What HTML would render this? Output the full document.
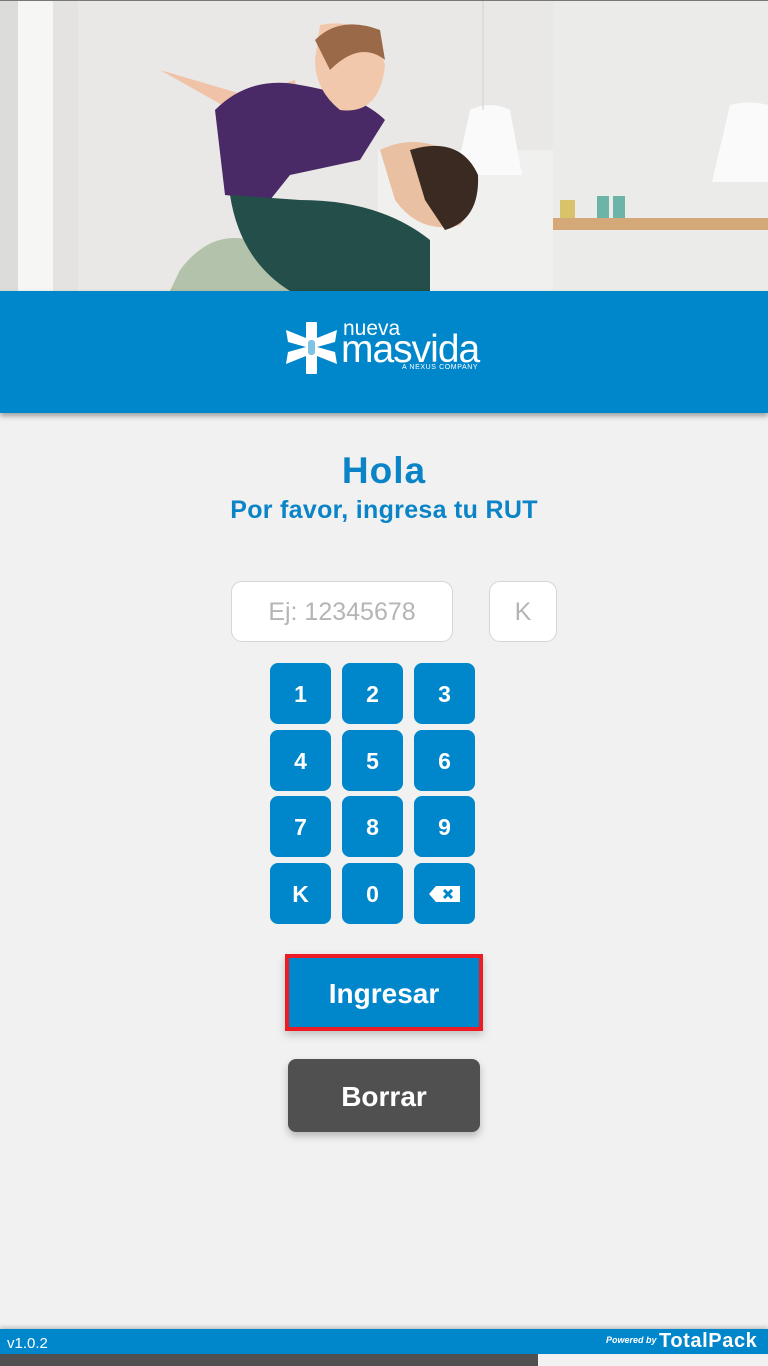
<!DOCTYPE html>
<html><head><meta charset="utf-8">
<style>
*{margin:0;padding:0;box-sizing:border-box}
body{width:768px;height:1366px;background:#f1f1f1;font-family:"Liberation Sans",sans-serif;position:relative;overflow:hidden}
.abs{position:absolute}
.hdr{left:0;top:291px;width:768px;height:122px;background:#0086ca;box-shadow:0 3px 5px rgba(0,0,0,.35)}
h1{position:absolute;left:0;width:768px;top:450px;text-align:center;color:#0a84c6;font-size:37px;font-weight:bold;letter-spacing:1px}
h2{position:absolute;left:0;width:768px;top:496px;text-align:center;color:#0a84c6;font-size:25px;font-weight:bold;letter-spacing:.3px}
.inp{background:#fff;border:1px solid #d6d6d6;border-radius:11px;color:#b5b5b5;font-size:25px;text-align:center;line-height:60px}
.key{width:61px;height:61px;background:#0086ca;border-radius:8px;color:#fff;font-weight:bold;font-size:23px;text-align:center;line-height:63px}
</style></head><body>
<svg class="abs" style="left:0;top:0" width="768" height="291" viewBox="0 0 768 291">
<rect width="768" height="291" fill="#e9e8e6"/>
<rect x="0" y="0" width="20" height="291" fill="#dcdcda"/>
<rect x="18" y="0" width="35" height="291" fill="#f6f6f5"/>
<rect x="53" y="0" width="25" height="291" fill="#e4e3e1"/>
<rect x="378" y="150" width="175" height="141" fill="#f0f0ef"/>
<rect x="553" y="0" width="215" height="291" fill="#ebebe9"/>
<rect x="553" y="218" width="215" height="12" fill="#d4a878"/>
<rect x="597" y="196" width="12" height="22" fill="#6cb3a8"/><rect x="613" y="196" width="12" height="22" fill="#6cb3a8"/>
<rect x="560" y="200" width="15" height="18" fill="#d9c36a"/>
<path d="M470 110 Q490 100 510 110 L522 175 L456 175 Z" fill="#fafafa"/>
<path d="M730 105 Q750 100 768 105 L768 182 L712 182 Z" fill="#fafafa"/>
<line x1="483" y1="0" x2="483" y2="110" stroke="#d0d0d0"/>
<path d="M180 270 Q210 230 250 240 L290 291 L170 291 Z" fill="#8fa884" opacity=".6"/>
<path d="M160 70 L245 95 L295 80 L300 110 L240 115 Z" fill="#f0c3a8"/>
<path d="M215 110 Q250 75 300 85 Q360 95 385 120 L360 160 L290 175 L270 200 L225 195 Z" fill="#4a2a66"/>
<path d="M320 25 Q370 15 385 65 Q380 115 340 110 Q315 90 315 60 Z" fill="#f2c8ad"/>
<path d="M315 40 Q340 15 380 30 L385 60 Q360 40 330 70 Z" fill="#9a6a48"/>
<path d="M230 195 Q240 260 290 291 L430 291 L430 240 Q380 200 300 200 Z" fill="#234e4a"/>
<path d="M380 150 Q420 130 465 160 Q480 200 460 225 Q420 235 395 200 Z" fill="#eac0a2"/>
<path d="M410 150 Q460 135 478 175 Q480 220 445 230 L425 200 Z" fill="#3a2a22"/>
<rect x="0" y="0" width="768" height="1" fill="#777"/>
</svg>
<div class="abs hdr"></div>
<svg class="abs" style="left:284px;top:320px" width="56" height="56" viewBox="0 0 56 56">
<g fill="#fff">
<rect x="22" y="2" width="11" height="52" rx="1"/>
<path d="M2 10 L22 18 L22 27 L4 22 Z"/>
<path d="M53 10 L33 18 L33 27 L51 22 Z"/>
<path d="M2 44 L22 36 L22 27 L4 32 Z"/>
<path d="M53 44 L33 36 L33 27 L51 32 Z"/>
</g><rect x="24" y="20" width="7" height="15" rx="3" fill="#0086ca" opacity=".5"/></svg>
<div class="abs" style="left:343px;top:318px;color:#fff;font-size:21px;line-height:22px">nueva</div>
<div class="abs" style="left:341px;top:330px;color:#fff;font-size:39px;line-height:40px;letter-spacing:-1px">masvida</div>
<div class="abs" style="left:402px;top:364px;color:#fff;font-size:7px;letter-spacing:.6px">A NEXUS COMPANY</div>
<h1>Hola</h1>
<h2>Por favor, ingresa tu RUT</h2>
<div class="abs inp" style="left:231px;top:581px;width:222px;height:61px">Ej: 12345678</div>
<div class="abs inp" style="left:489px;top:581px;width:68px;height:61px">K</div>
<div class="abs key" style="left:270px;top:663px">1</div>
<div class="abs key" style="left:342px;top:663px">2</div>
<div class="abs key" style="left:414px;top:663px">3</div>
<div class="abs key" style="left:270px;top:730px">4</div>
<div class="abs key" style="left:342px;top:730px">5</div>
<div class="abs key" style="left:414px;top:730px">6</div>
<div class="abs key" style="left:270px;top:796px">7</div>
<div class="abs key" style="left:342px;top:796px">8</div>
<div class="abs key" style="left:414px;top:796px">9</div>
<div class="abs key" style="left:270px;top:863px">K</div>
<div class="abs key" style="left:342px;top:863px">0</div>
<div class="abs key" style="left:414px;top:863px"><svg width="34" height="20" viewBox="0 0 34 20" style="margin-top:21px"><path d="M8 2 L32 2 L32 18 L8 18 L1 10 Z" fill="#fff"/><path d="M16 6 L24 14 M24 6 L16 14" stroke="#0086ca" stroke-width="3"/></svg></div>
<div class="abs" style="left:285px;top:954px;width:198px;height:77px;border:4px solid #ed1c24;background:#0086ca;color:#fff;font-weight:bold;font-size:28px;text-align:center;line-height:72px;box-shadow:0 4px 8px rgba(0,0,0,.2)">Ingresar</div>
<div class="abs" style="left:288px;top:1059px;width:192px;height:73px;border-radius:8px;background:#505050;color:#fff;font-weight:bold;font-size:28px;text-align:center;line-height:76px;box-shadow:0 4px 8px rgba(0,0,0,.25)">Borrar</div>
<div class="abs" style="left:0;top:1329px;width:768px;height:25px;background:#0086ca;box-shadow:0 -2px 4px rgba(0,0,0,.2)"></div>
<div class="abs" style="left:7px;top:1335px;color:#fff;font-size:15px">v1.0.2</div>
<div class="abs" style="left:606px;top:1335px;color:#fff;font-size:9px;font-style:italic;font-weight:bold">Powered by</div>
<div class="abs" style="left:659px;top:1330px;color:#fff;font-size:20px;font-weight:bold;letter-spacing:.6px">TotalPack</div>
<div class="abs" style="left:0;top:1354px;width:538px;height:12px;background:#505050"></div>
</body></html>
